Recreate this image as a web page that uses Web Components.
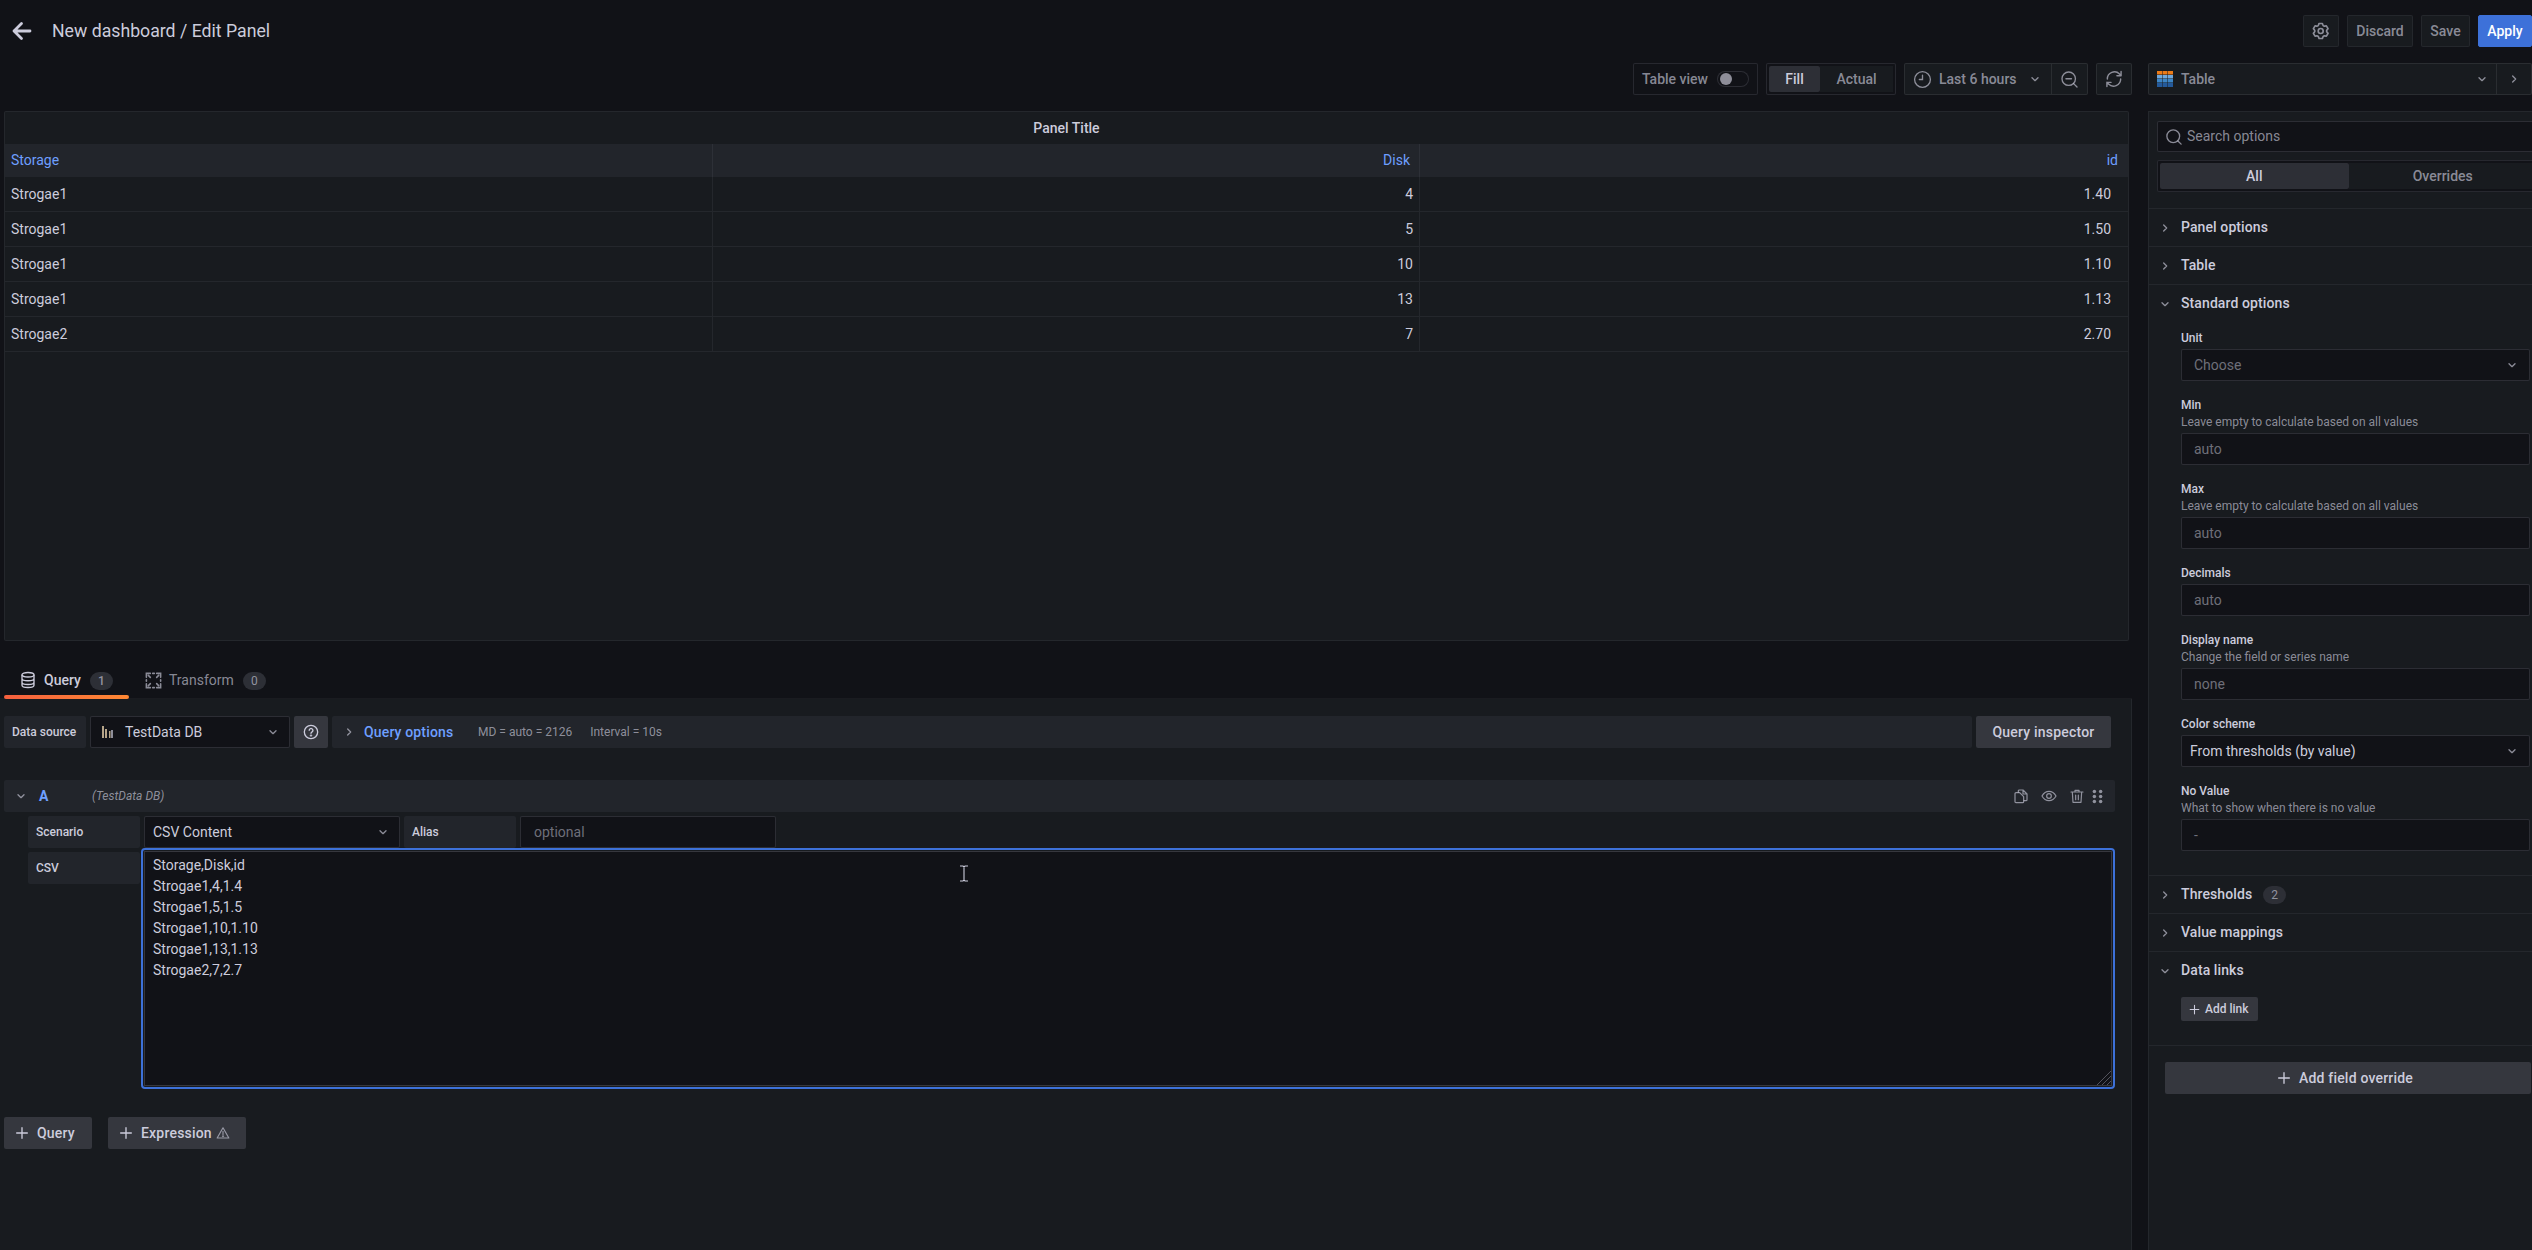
<!DOCTYPE html>
<html>
<head>
<meta charset="utf-8">
<title>Edit Panel</title>
<style>
  html, body { margin: 0; padding: 0; background: #111217; overflow: hidden; }
  body { font: 14px/1.5 Roboto, "Liberation Sans", sans-serif; color: #ccccdc; }
</style>
</head>
<body>
<g-app>
  <g-topbar slot="top" heading="New dashboard / Edit Panel"></g-topbar>
  <div slot="left">
    <g-toolbar></g-toolbar>
    <g-table-panel heading="Panel Title"></g-table-panel>
    <g-query-tabs></g-query-tabs>
  </div>
  <g-query-editor slot="bottom"></g-query-editor>
  <g-options-pane slot="right">
    <g-section heading="Panel options"></g-section>
    <g-section heading="Table"></g-section>
    <g-section heading="Standard options" open lead="6" tail="10">
      <g-field label="Unit" value="Choose" select></g-field>
      <g-field label="Min" hint="Leave empty to calculate based on all values" value="auto"></g-field>
      <g-field label="Max" hint="Leave empty to calculate based on all values" value="auto"></g-field>
      <g-field label="Decimals" value="auto"></g-field>
      <g-field label="Display name" hint="Change the field or series name" value="none"></g-field>
      <g-field label="Color scheme" value="From thresholds (by value)" select filled></g-field>
      <g-field label="No Value" hint="What to show when there is no value" value="-"></g-field>
    </g-section>
    <g-section heading="Thresholds" badge="2"></g-section>
    <g-section heading="Value mappings"></g-section>
    <g-section heading="Data links" open lead="8" tail="24">
      <g-button plus small style="display:flex;width:77px">Add link</g-button>
    </g-section>
  </g-options-pane>
</g-app>

<script>
const ICONS = {
  gear: `<path fill="currentColor" stroke="none" d="M19.9,12.66a1,1,0,0,1,0-1.32L21.18,9.9a1,1,0,0,0,.12-1.17l-2-3.46a1,1,0,0,0-1.07-.48l-1.88.38a1,1,0,0,1-1.15-.66l-.61-1.83A1,1,0,0,0,13.64,2h-4a1,1,0,0,0-1,.68L8.08,4.51a1,1,0,0,1-1.15.66L5,4.79A1,1,0,0,0,4,5.27L2,8.73A1,1,0,0,0,2.1,9.9l1.27,1.44a1,1,0,0,1,0,1.32L2.1,14.1A1,1,0,0,0,2,15.27l2,3.46a1,1,0,0,0,1.07.48l1.88-.38a1,1,0,0,1,1.15.66l.61,1.83a1,1,0,0,0,1,.68h4a1,1,0,0,0,.95-.68l.61-1.83a1,1,0,0,1,1.15-.66l1.88.38a1,1,0,0,0,1.07-.48l2-3.46a1,1,0,0,0-.12-1.17ZM18.41,14l.8.9-1.28,2.22-1.18-.24a3,3,0,0,0-3.45,2L12.92,20H10.36L10,18.86a3,3,0,0,0-3.45-2l-1.18.24L4.07,14.89l.8-.9a3,3,0,0,0,0-4l-.8-.9L5.35,6.89l1.18.24a3,3,0,0,0,3.45-2L10.36,4h2.56l.38,1.14a3,3,0,0,0,3.45,2l1.18-.24,1.28,2.22-.8.9A3,3,0,0,0,18.41,14ZM11.64,8a4,4,0,1,0,4,4A4,4,0,0,0,11.64,8Zm0,6a2,2,0,1,1,2-2A2,2,0,0,1,11.64,14Z"/>`,
  back: `<path d="M20 12H4M11.500 4.500 4 12l7.500 7.500" stroke-width="2.800" stroke-linecap="round" stroke-linejoin="round"/>`,
  down: `<path d="M7.500 10l4.500 4.500 4.500-4.500" stroke-width="2" stroke-linecap="round" stroke-linejoin="round"/>`,
  right: `<path d="M10 7.500l4.500 4.500-4.500 4.500" stroke-width="2" stroke-linecap="round" stroke-linejoin="round"/>`,
  clock: `<circle cx="12" cy="12" r="10" stroke-width="1.700"/><path d="M12 6.500V12H8" stroke-width="1.700" stroke-linecap="round"/>`,
  zoomout: `<circle cx="11" cy="11" r="8.500" stroke-width="1.700"/><path d="M7.500 11h7M17.200 17.200 21.500 21.500" stroke-width="1.700" stroke-linecap="round"/>`,
  sync: `<path d="M4 12a8.500 8.500 0 0 1 14.600-5.900L20.500 8M20 12a8.500 8.500 0 0 1-14.600 5.900L3.500 16M20.500 3v5h-5M3.500 21v-5h5" stroke-width="1.700" stroke-linecap="round" stroke-linejoin="round"/>`,
  search: `<circle cx="11" cy="11" r="8.500" stroke-width="1.800"/><path d="M17.200 17.200 21.500 21.500" stroke-width="1.800" stroke-linecap="round"/>`,
  database: `<ellipse cx="12" cy="5" rx="8" ry="3" stroke-width="1.800"/><path d="M4 5v14c0 1.700 3.600 3 8 3s8-1.300 8-3V5M4 10c0 1.700 3.600 3 8 3s8-1.300 8-3M4 15c0 1.700 3.600 3 8 3s8-1.300 8-3" stroke-width="1.800"/>`,
  transform: `<path d="M3 8V3h5M21 8V3h-5M3 16v5h5M21 16v5h-5M8 8 5.500 5.500M16 8l2.500-2.500M8 16l-2.500 2.500M16 16l2.500 2.500M11 3h2M11 21h2M3 11v2M21 11v2" stroke-width="2" stroke-linecap="round"/>`,
  question: `<circle cx="12" cy="12" r="10" stroke-width="2"/><path d="M9.300 9.500a2.800 2.800 0 1 1 4.300 2.400c-1 .6-1.600 1.100-1.600 2.100" stroke-width="2" stroke-linecap="round"/><circle cx="12" cy="17.300" r="1.200" fill="currentColor"/>`,
  plus: `<path d="M12 4v16M4 12h16" stroke-width="2" stroke-linecap="round"/>`,
  warning: `<path d="M12 3 22 20.500H2Z" stroke-width="2" stroke-linejoin="round"/><path d="M12 9.500v5" stroke-width="2" stroke-linecap="round"/><circle cx="12" cy="17.500" r="1.100" fill="currentColor"/>`,
  copy: `<path d="M8 7V4.500A1.500 1.500 0 0 1 9.500 3H15l6 6v8.500a1.500 1.500 0 0 1-1.500 1.500H16M15 3v6h6" stroke-width="1.800" stroke-linejoin="round"/><path d="M4.500 7H10l6 6v7.500a1.500 1.500 0 0 1-1.500 1.500h-10A1.500 1.500 0 0 1 3 20.500v-12A1.500 1.500 0 0 1 4.500 7Z" stroke-width="1.800" stroke-linejoin="round"/>`,
  eye: `<path d="M1.500 12C4 7.500 7.700 5 12 5s8 2.500 10.500 7C20 16.500 16.300 19 12 19S4 16.500 1.500 12Z" stroke-width="1.800" stroke-linejoin="round"/><circle cx="12" cy="12" r="3.500" stroke-width="1.800"/>`,
  trash: `<path d="M3 6h18M9 6V3.500h6V6M5 6l1 15.500h12L19 6M10 10.500v7M14 10.500v7" stroke-width="1.800" stroke-linecap="round" stroke-linejoin="round"/>`,
  drag: `<g fill="currentColor" stroke="none"><circle cx="7" cy="4" r="2.800"/><circle cx="17" cy="4" r="2.800"/><circle cx="7" cy="12" r="2.800"/><circle cx="17" cy="12" r="2.800"/><circle cx="7" cy="20" r="2.800"/><circle cx="17" cy="20" r="2.800"/></g>`
}

function icon(name, size = 16, color = "currentColor") {
  return `<svg width="${size}" height="${size}" viewBox="0 0 24 24" fill="none" stroke="currentColor" style="color:${color};display:block;flex:none">${ICONS[name]}</svg>`
}

function define(tag, css, html, extra = {}) {
  const template = document.createElement("template")
  template.innerHTML = `<style>:host, * { box-sizing: border-box; } ${css}</style>${html}`
  customElements.define(tag, class extends HTMLElement {
    constructor() {
      super()
      const shadow = this.attachShadow({mode: "open"})
      shadow.appendChild(template.content.cloneNode(true))
    }
    connectedCallback() {
      if (extra.render) extra.render(this, this.shadowRoot)
    }
  })
}

const MUTED = "rgba(204,204,220,.65)"
const PLACEHOLDER = "rgba(204,204,220,.5)"

define("g-app", `
  :host { display: grid; grid-template-columns: 2132px 384px; column-gap: 16px; grid-template-rows: 63px 636px 551px; width: 2532px; height: 1250px; overflow: hidden; }
  .top { grid-column: 1 / 3; }
  .right { grid-column: 2; grid-row: 2 / 4; display: block; min-width: 0; }
`, `
  <div class="top"><slot name="top"></slot></div>
  <div style="grid-column:1;grid-row:2"><slot name="left"></slot></div>
  <div style="grid-column:1;grid-row:3"><slot name="bottom"></slot></div>
  <div class="right"><slot name="right"></slot></div>
`)

define("g-button", `
  :host { display: inline-flex; align-items: center; height: 32px; padding: 0 16px 0 10px; gap: 7px; background: #35373e; border-radius: 2px; font-weight: 500; color: #ccccdc; font-size: 14px; white-space: nowrap; letter-spacing: .2px; }
  :host([small]) { height: 24px; padding: 0 9px 0 7px; gap: 4px; font-size: 12px; letter-spacing: 0; }
  #ico { display: flex; }
`, `<span id="ico"></span><slot></slot>`, {
  render(el, root) {
    const slot = root.getElementById("ico")
    if (el.hasAttribute("plus")) slot.innerHTML = icon("plus", el.hasAttribute("small") ? 13 : 16)
    else slot.remove()
  }
})

define("g-topbar", `
  :host { display: flex; height: 63px; padding-top: 15px; align-items: flex-start; }
  .back { width: 52px; padding: 4px 0 0 10px; height: 32px; color: #ccccdc; }
  h1 { margin: 0; font-size: 17.700px; font-weight: 400; line-height: 32px; height: 32px; color: #ccccdc; flex: 1; }
  .btn { height: 32px; border: 1px solid rgba(204,204,220,.07); background: #181b1f; border-radius: 2px; display: flex; align-items: center; justify-content: center; color: ${MUTED}; font-weight: 500; font-size: 14px; margin-left: 8px; }
  .apply { background: #3d71d9; border-color: #3d71d9; color: #fff; width: 54px; }
`, `
  <div class="back">${icon("back", 24)}</div>
  <h1 id="title"></h1>
  <div class="btn" style="width:36px">${icon("gear", 20)}</div>
  <div class="btn" style="width:66px">Discard</div>
  <div class="btn" style="width:49px">Save</div>
  <div class="btn apply">Apply</div>
`, {
  render(el, root) { root.getElementById("title").textContent = el.getAttribute("heading") }
})

define("g-toolbar", `
  :host { display: flex; justify-content: flex-end; gap: 8px; height: 32px; color: ${MUTED}; font-size: 14px; font-weight: 500; }
  .box { border: 1px solid rgba(204,204,220,.12); border-radius: 2px; display: flex; align-items: center; height: 32px; }
  .switch { width: 32px; height: 16px; border: 1px solid rgba(204,204,220,.15); border-radius: 50px; margin-left: 9px; position: relative; background: #111217; }
  .switch i { position: absolute; left: 2px; top: 1px; width: 12px; height: 12px; border-radius: 50%; background: #8e8e99; }
  .radio { padding: 2px; background: #111217; width: 130px; }
  .radio div { height: 26px; display: flex; align-items: center; justify-content: center; }
  .on { width: 51px; background: #2d2f36; color: #ccccdc; border-radius: 2px; font-weight: 500; }
  .off { flex: 1; background: #181b1f; }
  .picker { background: #181b1f; border-color: rgba(204,204,220,.1); }
  .sep { border-left: 1px solid rgba(204,204,220,.1); height: 30px; width: 36px; display: flex; align-items: center; justify-content: center; }
`, `
  <div class="box" style="width:125px;padding-left:8px;background:#111217">Table view<span class="switch"><i></i></span></div>
  <div class="box radio"><div class="on">Fill</div><div class="off">Actual</div></div>
  <div class="box picker" style="width:184px;padding-left:8px">
    ${icon("clock", 19)}<span style="margin-left:7px;width:88px;white-space:nowrap">Last 6 hours</span>${icon("down", 16)}
    <span class="sep" style="margin-left:auto">${icon("zoomout", 19)}</span>
  </div>
  <div class="box picker" style="width:36px;justify-content:center">${icon("sync", 20)}</div>
`)

const TABLE_ROWS = [
  ["Strogae1", "4", "1.40"],
  ["Strogae1", "5", "1.50"],
  ["Strogae1", "10", "1.10"],
  ["Strogae1", "13", "1.13"],
  ["Strogae2", "7", "2.70"]
]

define("g-table-panel", `
  :host { display: block; margin: 16px 2px 0 4px; height: 530px; background: #181b1f; border: 1px solid rgba(204,204,220,.07); border-radius: 2px; width: 2125px; }
  h2 { margin: 0; height: 32px; text-align: center; font-size: 14px; font-weight: 500; line-height: 32px; color: #ccccdc; }
  .row { display: grid; grid-template-columns: 707px 707px 709px; height: 35px; border-bottom: 1px solid rgba(204,204,220,.07); line-height: 34px; }
  .head { height: 33px; line-height: 33px; background: #22252b; color: #6e9fff; font-weight: 400; border-bottom: 0; }
  .row div { padding: 0 6px; }
  .row div + div { text-align: right; border-left: 1px solid rgba(204,204,220,.07); }
  .row div:nth-child(3) { padding-right: 17px; }
  .head div:nth-child(2) { padding-right: 9px; }
  .head div:nth-child(3) { padding-right: 10px; }
`, `<h2 id="title"></h2><div id="rows"></div>`, {
  render(el, root) {
    root.getElementById("title").textContent = el.getAttribute("heading")
    const cells = row => row.map(text => `<div>${text}</div>`).join("")
    root.getElementById("rows").innerHTML =
      `<div class="row head">${cells(["Storage", "Disk", "id"])}</div>` +
      TABLE_ROWS.map(row => `<div class="row">${cells(row)}</div>`).join("")
  }
})

define("g-query-tabs", `
  :host { display: flex; height: 58px; padding: 29px 0 0 4px; border-bottom: 1px solid rgba(204,204,220,.05); font-weight: 500; color: ${MUTED}; }
  .tab { height: 29px; display: flex; align-items: flex-start; position: relative; }
  .tab span { line-height: 20px; }
  .on { width: 125px; color: #ccccdc; padding-left: 15px; }
  .on::after { content: ""; position: absolute; left: 0; right: 0; bottom: 0; height: 4px; background: linear-gradient(90deg, #f55f3e, #ff8833); border-radius: 2px; }
  .on svg { margin: 1px 7px 0 0; }
  .off { padding-left: 15px; font-weight: 400; }
  .off svg { margin: 1px 6px 0 0; }
  .count { margin-left: 9px; height: 18px; width: 23px; border-radius: 9px; background: #2d2f36; font-size: 12px; line-height: 18px !important; text-align: center; margin-top: 2px; color: ${MUTED}; }
`, `
  <div class="tab on">${icon("database", 18, "#ccccdc")}<span>Query</span><span class="count">1</span></div>
  <div class="tab off">${icon("transform", 19)}<span>Transform</span><span class="count">0</span></div>
`)

define("g-cell", `
  :host { display: flex; align-items: center; height: 32px; border-radius: 2px; flex: none; font-size: 14px; white-space: nowrap; }
  :host([label]) { background: #22252b; font-size: 12px; font-weight: 500; padding: 0 8px; color: #ccccdc; }
  :host([input]) { background: #111217; border: 1px solid rgba(204,204,220,.15); padding: 0 8px; }
`, `<slot></slot>`)

define("g-query-editor", `
  :host { display: block; height: 551px; width: 2132px; background: #181b1f; border-right: 1px solid rgba(204,204,220,.07); padding: 17px 0 0 4px; }
  .row { display: flex; gap: 4px; height: 32px; }
  .qo { width: 1640px; background: #22252b; border-radius: 2px; display: flex; align-items: center; padding-left: 9px; height: 32px; color: ${MUTED}; }
  .qo b { color: #6e9fff; font-weight: 500; margin: 0 0 0 7px; width: 105px; letter-spacing: .15px; }
  .qo span { font-size: 12px; }
  .help { width: 34px; height: 32px; background: #35373e; border-radius: 2px; display: flex; align-items: center; justify-content: center; }
  .query { margin-top: 32px; width: 2111px; height: 32px; background: #22252b; border-radius: 2px; display: flex; align-items: center; padding-left: 9px; }
  .query b { color: #6e9fff; font-weight: 700; margin-left: 10px; width: 53px; }
  .query i { color: ${MUTED}; font-size: 12px; flex: 1; }
  .tools { display: flex; align-items: center; color: ${MUTED}; margin-right: 10px; }
  .sub { margin: 4px 0 0 24px; }
  .csv { display: flex; margin-left: 24px; }
  .ta { margin-left: 1px; width: 1974px; height: 241px; border: 2px solid #3d71d9; border-radius: 4px; padding: 1px; background: #181b1f; }
  .ta > div { position: relative; height: 100%; background: #111217; border: 1px solid rgba(204,204,220,.2); padding: 3px 8px; line-height: 21px; white-space: pre; font-size: 14px; }
  .grip { position: absolute; right: 0; bottom: 0; display: block; }
  .adds { display: flex; gap: 16px; margin-top: 28px; }
  .cursor { position: absolute; left: 814px; top: 13px; color: #ccccdc; }
`, `
  <div class="row">
    <g-cell label style="width:82px">Data source</g-cell>
    <g-cell input style="width:200px;padding-left:11px">
      <svg width="11" height="12" viewBox="0 0 11 12" style="margin-right:12px;flex:none"><g fill="#b6a488"><rect x="0" y="0" width="2" height="12"/><rect x="3" y="3" width="2" height="9"/><rect x="7" y="5" width="1.500" height="7"/><rect x="9" y="4" width="2" height="8" fill="#8e8e99"/></g></svg>
      <span style="flex:1">TestData DB</span>${icon("down", 16, MUTED)}
    </g-cell>
    <div class="help">${icon("question", 16, "#ccccdc")}</div>
    <div class="qo" style="width:1640px">${icon("right", 16, MUTED)}<b>Query options</b><span style="margin-left:9px">MD = auto = 2126</span><span style="margin-left:18px">Interval = 10s</span></div>
    <g-button style="width:135px;padding:0;justify-content:center">Query inspector</g-button>
  </div>
  <div class="query">
    ${icon("down", 16, MUTED)}<b>A</b><i>(TestData DB)</i>
    <div class="tools">
      ${icon("copy", 16)}<span style="width:12px"></span>${icon("eye", 16)}<span style="width:12px"></span>${icon("trash", 16)}<span style="width:5px"></span>${icon("drag", 15)}
    </div>
  </div>
  <div class="row sub">
    <g-cell label style="width:112px">Scenario</g-cell>
    <g-cell input style="width:256px"><span style="flex:1">CSV Content</span>${icon("down", 16, MUTED)}</g-cell>
    <g-cell label style="width:112px">Alias</g-cell>
    <g-cell input style="width:256px;color:${PLACEHOLDER};padding-left:13px">optional</g-cell>
  </div>
  <div class="csv">
    <g-cell label style="width:112px;margin-top:4px">CSV</g-cell>
    <div class="ta"><div>Storage,Disk,id
Strogae1,4,1.4
Strogae1,5,1.5
Strogae1,10,1.10
Strogae1,13,1.13
Strogae2,7,2.7<svg class="grip" width="15" height="15" viewBox="0 0 15 15" stroke="rgba(204,204,220,.35)"><path d="M1 15 15 1M6 15 15 6M11 15l4-4"/></svg><svg class="cursor" width="10" height="17" viewBox="0 0 10 17" fill="none" stroke="currentColor"><path d="M1 1h3l1 1 1-1h3M5 2v13M1 16h3l1-1 1 1h3" stroke-width="1.100"/></svg></div></div>
  </div>
  <div class="adds">
    <g-button plus style="width:88px">Query</g-button>
    <g-button plus style="width:138px">Expression<span style="margin-left:-3px">${icon("warning", 14, MUTED)}</span></g-button>
  </div>
`)

define("g-options-pane", `
  :host { display: block; height: 1187px; overflow: hidden; }
  .picker { height: 32px; border: 1px solid rgba(204,204,220,.1); background: #181b1f; display: flex; align-items: center; color: ${MUTED}; font-weight: 500; padding-left: 8px; border-radius: 2px; }
  .picker span { margin-left: 8px; flex: 1; }
  .picker .sq { width: 35px; height: 30px; border-left: 1px solid rgba(204,204,220,.1); display: flex; align-items: center; justify-content: center; }
  .pane { margin-top: 16px; background: #181b1f; border: 1px solid rgba(204,204,220,.07); border-right: 0; height: 1140px; overflow: hidden; }
  .search { height: 31px; margin: 9px -8px 0 8px; background: #111217; border: 1px solid rgba(204,204,220,.15); border-radius: 2px; display: flex; align-items: center; padding-left: 7px; color: ${MUTED}; }
  .search span { margin-left: 4px; }
  .radio { height: 32px; margin: 8px -8px 16px 8px; background: #111217; border: 1px solid rgba(204,204,220,.12); border-radius: 2px; padding: 2px; display: flex; color: ${MUTED}; font-weight: 500; }
  .radio div { flex: 1; display: flex; align-items: center; justify-content: center; }
  .radio .on { background: #2d2f36; color: #ccccdc; border-radius: 2px; }
  .radio .off { background: #181b1f; }
  .list { border-top: 1px solid rgba(204,204,220,.07); }
`, `
  <div class="picker">
    <svg width="16" height="16" viewBox="0 0 16 16" style="flex:none">
      <g fill="#eb7b18"><rect width="5" height="3.500"/><rect x="5.500" width="5" height="3.500"/><rect x="11" width="5" height="3.500"/></g>
      <g fill="#6fa8dc"><rect y="4" width="5" height="3.500"/><rect x="5.500" y="4" width="5" height="3.500"/><rect x="11" y="4" width="5" height="3.500"/></g>
      <g fill="#3d85c6"><rect y="8" width="5" height="3.500"/><rect x="5.500" y="8" width="5" height="3.500"/><rect x="11" y="8" width="5" height="3.500"/></g>
      <g fill="#245a9b"><rect y="12" width="5" height="4"/><rect x="5.500" y="12" width="5" height="4"/><rect x="11" y="12" width="5" height="4"/></g>
    </svg>
    <span>Table</span>${icon("down", 16)}<div class="sq" style="margin-left:6px">${icon("right", 16)}</div>
  </div>
  <div class="pane">
    <div class="search">${icon("search", 18)}<span>Search options</span></div>
    <div class="radio"><div class="on">All</div><div class="off">Overrides</div></div>
    <div class="list"><slot></slot></div>
    <g-button style="display:flex;width:366px;margin:16px 1px 0 16px;padding:0 7px 0 0;gap:7px;justify-content:center">${icon("plus", 16)}Add field override</g-button>
  </div>
`)

define("g-section", `
  :host { display: block; border-bottom: 1px solid rgba(204,204,220,.07); }
  .head { height: 37px; display: flex; align-items: center; font-weight: 500; padding-left: 8px; color: #ccccdc; letter-spacing: .1px; }
  .head svg { margin-right: 8px; }
  .badge { margin-left: 11px; height: 18px; width: 23px; border-radius: 9px; background: #2d2f36; font-size: 12px; line-height: 18px; text-align: center; color: ${MUTED}; font-weight: 400; }
  .body { padding: 6px 2px 0 32px; }
`, `<div class="head"><span id="chev"></span><span id="title"></span></div><div class="body" id="body"><slot></slot></div>`, {
  render(el, root) {
    const open = el.hasAttribute("open")
    root.getElementById("chev").innerHTML = icon(open ? "down" : "right", 16, MUTED)
    const title = root.getElementById("title")
    title.textContent = el.getAttribute("heading")
    if (el.hasAttribute("badge")) title.insertAdjacentHTML("afterend", `<span class="badge">${el.getAttribute("badge")}</span>`)
    const body = root.getElementById("body")
    if (open) {
      body.style.paddingTop = `${el.getAttribute("lead")}px`
      body.style.paddingBottom = `${el.getAttribute("tail")}px`
    }
    else body.remove()
  }
})

define("g-field", `
  :host { display: block; margin-bottom: 14px; }
  .label { font-size: 12px; font-weight: 500; line-height: 17px; padding-top: 2px; height: 19px; color: #ccccdc; }
  .hint { font-size: 12px; line-height: 17px; color: ${MUTED}; }
  .box { margin-top: 2px; height: 32px; background: #111217; border: 1px solid rgba(204,204,220,.15); border-radius: 2px; display: flex; align-items: center; padding-left: 12px; color: ${PLACEHOLDER}; }
  .box span { flex: 1; }
  .box svg { margin-right: 9px; }
  :host([filled]) .box { color: #ccccdc; padding-left: 8px; }
`, `<div class="label" id="label"></div><div class="hint" id="hint"></div><div class="box" id="box"><span id="value"></span></div>`, {
  render(el, root) {
    root.getElementById("label").textContent = el.getAttribute("label")
    const hint = el.getAttribute("hint")
    const hintBox = root.getElementById("hint")
    if (hint) hintBox.textContent = hint
    else hintBox.remove()
    root.getElementById("value").textContent = el.getAttribute("value")
    if (el.hasAttribute("select")) root.getElementById("box").insertAdjacentHTML("beforeend", icon("down", 16, MUTED))
  }
})
</script>
</body>
</html>
